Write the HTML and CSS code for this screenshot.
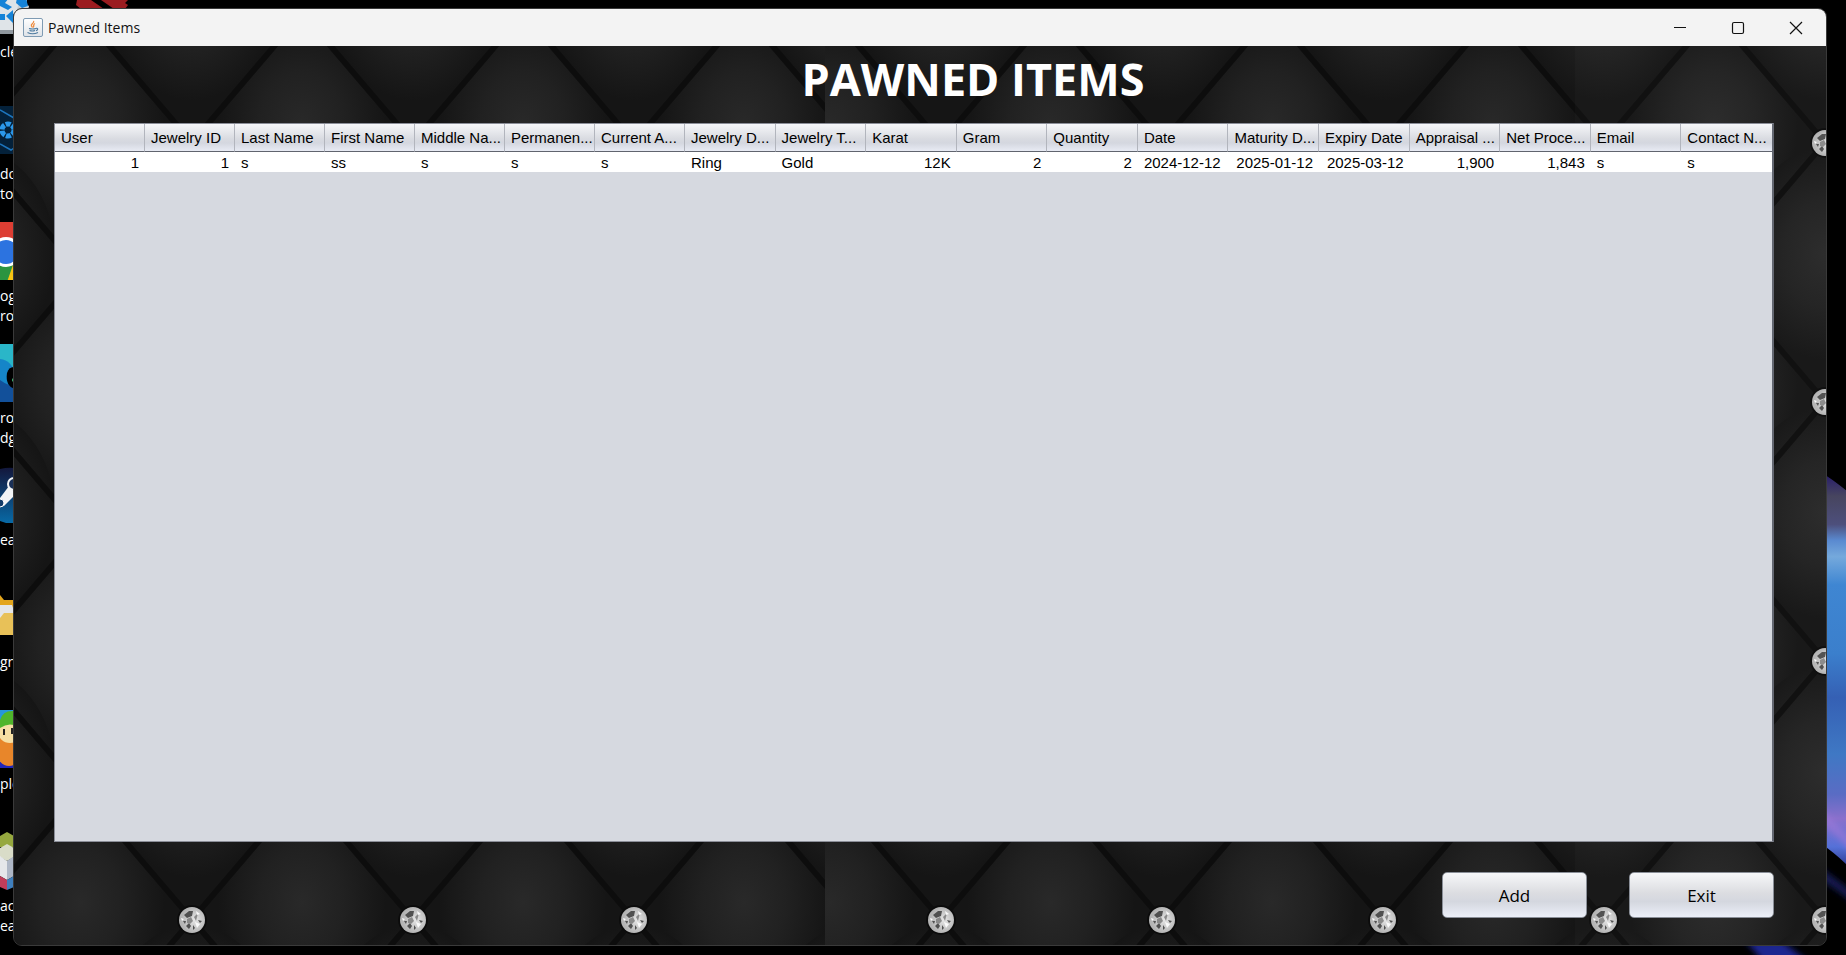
FILE: index.html
```html
<!DOCTYPE html>
<html lang="en">
<head>
<meta charset="utf-8">
<title>Pawned Items</title>
<link rel="stylesheet" href="styles.css">
</head>
<body>
<div class="desktop">
  <svg class="wallpaper" aria-hidden="true" viewBox="0 0 60 530" preserveAspectRatio="none">
    <defs>
      <linearGradient id="wave" x1="0" y1="0" x2="0" y2="1">
        <stop offset="0" stop-color="#24186c"/>
        <stop offset=".06" stop-color="#47455f"/>
        <stop offset=".13" stop-color="#4d4f7c"/>
        <stop offset=".17" stop-color="#5a8ad0"/>
        <stop offset=".21" stop-color="#75a9dc"/>
        <stop offset=".28" stop-color="#3f86d2"/>
        <stop offset=".45" stop-color="#3b7fcc"/>
        <stop offset=".56" stop-color="#3560b4"/>
        <stop offset=".70" stop-color="#3f78c4"/>
        <stop offset=".80" stop-color="#5a6cc4"/>
        <stop offset=".86" stop-color="#8a70cc"/>
        <stop offset=".93" stop-color="#5571d8"/>
        <stop offset="1" stop-color="#1d2474"/>
      </linearGradient>
      <filter id="soft" x="-20%" y="-20%" width="140%" height="140%"><feGaussianBlur stdDeviation="3"/></filter>
    </defs>
    <path d="M34 47Q50 56 70 74V450Q55 432 34 418Z" fill="url(#wave)"/>
    <path d="M30 380Q50 396 70 420V432Q50 408 30 394Z" fill="#9a78d8" opacity=".7" filter="url(#soft)"/>
    <path d="M30 440Q48 452 70 470V480Q48 462 30 452Z" fill="#171a55" filter="url(#soft)"/>
    <path d="M-40 516H-4L26 540H-20Z" fill="#1e2590" filter="url(#soft)"/>
  </svg>
  <svg class="red-icon" viewBox="0 0 54 9" aria-hidden="true"><path d="M2 0H53L50 3L53 5L50 9H39L26 0H16L29 9H6L1 5Z" fill="#9b1c20"/></svg>

  <div class="shortcuts">
    <div class="shortcut">
      <svg viewBox="0 0 30 60" aria-hidden="true">
        <path d="M0 0H29L24 58L16 58H0Z" fill="#dfe4e8"/>
        <path d="M0 54H24V58H0Z" fill="#8f979e"/>
        <path d="M20 24L29 30L24 54H16L12 48Z" fill="#c9cfd4"/>
        <path d="M0 22H9L5 27L12 31L8 34L0 30ZM17 22H26L28 30L22 32L16 27ZM0 38H5V44H0ZM6 40L13 34V38L22 36L20 44L13 43V47Z" fill="#1583d8"/>
      </svg>
      <span class="label">cle</span>
    </div>
    <div class="shortcut">
      <svg viewBox="0 0 30 60" aria-hidden="true">
        <path d="M0 8H30V56H0Z" fill="#04213a"/>
        <path d="M0 12L14 20M0 46L11 52L14 50" fill="none" stroke="#1d75bd" stroke-width="1.500"/>
        <circle cx="8" cy="32" r="6" fill="none" stroke="#2b98ea" stroke-width="5" stroke-dasharray="5 1.3"/>
      </svg>
      <span class="label">dol<br>tos</span>
    </div>
    <div class="shortcut">
      <svg viewBox="0 0 30 60" aria-hidden="true">
        <path d="M0 2H30V20H0Z" fill="#dd3e33"/><path d="M0 28H20L8 62H0Z" fill="#2a9440"/><path d="M14 42V62H7Z" fill="#f7c413"/>
        <circle cx="6" cy="32" r="15" fill="#fff"/><circle cx="6" cy="32" r="12" fill="#2c73e0"/>
      </svg>
      <span class="label">og<br>ror</span>
    </div>
    <div class="shortcut">
      <svg viewBox="0 0 30 60" aria-hidden="true">
        <path d="M0 2H30V60H0Z" fill="#2ab6c8"/><path d="M0 17Q12 18 16 34V62H0Z" fill="#1585c8"/><path d="M0 38Q8 44 16 44V62H0Z" fill="#12509a"/>
        <path d="M7 31Q9 24 15 25V47Q5 44 7 31Z" fill="#000"/><circle cx="14" cy="38" r="2" fill="#42c77d"/>
      </svg>
      <span class="label">ro:<br>dg</span>
    </div>
    <div class="shortcut">
      <svg viewBox="0 0 30 60" aria-hidden="true">
        <defs><linearGradient id="steam" x1="0" y1="0" x2="0" y2="1"><stop stop-color="#13173c"/><stop offset="1" stop-color="#0869a5"/></linearGradient></defs>
        <path d="M0 5Q8 3 14 4V59H6L0 57Z" fill="url(#steam)"/>
        <path d="M0 34L9 22L16 30L4 42L0 43Z" fill="#f2f4f6"/><circle cx="14" cy="20" r="6" fill="#1b3158" stroke="#f2f4f6" stroke-width="2"/><circle cx="0" cy="39" r="4" fill="#123b68" stroke="#fff" stroke-width="1"/>
      </svg>
      <span class="label">ea</span>
    </div>
    <div class="shortcut">
      <svg viewBox="0 0 30 60" aria-hidden="true">
        <path d="M0 9L4 14H14V49H0Z" fill="#e3a51c"/><path d="M0 19H12L14 25V40H0Z" fill="#e4e6e8"/><path d="M0 32L4 27H14V49H0Z" fill="#e8c158"/>
      </svg>
      <span class="label">grii</span>
    </div>
    <div class="shortcut">
      <svg viewBox="0 0 30 60" aria-hidden="true">
        <path d="M0 2H14V60H0Z" fill="#2696dc"/><path d="M0 54H14V60H0Z" fill="#2026b8"/><ellipse cx="9" cy="42" rx="13" ry="16" fill="#e8862a"/>
        <ellipse cx="10" cy="24" rx="12" ry="11" fill="#f6dfa4"/><path d="M0 12Q3 2 14 3V17Q7 15 0 20Z" fill="#4fb52b"/><path d="M4 21V27M12 20V26" stroke="#222" stroke-width="2"/>
      </svg>
      <span class="label">ple</span>
    </div>
    <div class="shortcut">
      <svg viewBox="0 0 30 60" aria-hidden="true">
        <path d="M0 6L7 2L14 6V17H0Z" fill="#96a83f"/><path d="M0 18L7 14L14 18V27L7 31L0 27Z" fill="#d9dcc8"/><path d="M0 26L7 31V50L0 46Z" fill="#e5e7ea"/><path d="M7 31L14 26V46L7 50Z" fill="#aeb7c6"/><path d="M0 46L7 50V60L0 57Z" fill="#c13d5b"/><path d="M7 50L14 46V57L7 60Z" fill="#3f7fbd"/>
      </svg>
      <span class="label">ac<br>ea</span>
    </div>
  </div>

  <main class="window">
    <header class="titlebar">
      <svg class="java" viewBox="0 0 20 20" aria-hidden="true">
        <defs><linearGradient id="tile" x1="0" y1="0" x2="0" y2="1"><stop stop-color="#fff"/><stop offset="1" stop-color="#dfe3e8"/></linearGradient></defs>
        <rect x=".5" y=".5" width="19" height="18" rx="1.5" fill="url(#tile)" stroke="#7f9bb3"/>
        <path d="M10.500 3C12 5 7 6 8.500 8L9.500 9.500M12 5.500C9.500 6.800 11.500 7.500 10.300 9.500" fill="none" stroke="#ee8a3c" stroke-width="1.300"/>
        <path d="M6 10.500Q9.500 11.500 13 10.500M6.500 12.500Q9.500 13.500 12 12.500M13 10.300C15.500 10 15 12 13 12.800M4.500 14.500Q9.500 17 15 14.500" fill="none" stroke="#4d7a9e" stroke-width="1.200"/>
      </svg>
      <span class="caption">Pawned Items</span>
      <div class="controls">
        <button class="control" aria-label="Minimize"><svg viewBox="0 0 14 14"><path d="M1 6.500H13"/></svg></button>
        <button class="control" aria-label="Maximize"><svg viewBox="0 0 14 14"><rect x="1.500" y="1.500" width="11" height="11" rx="1.500"/></svg></button>
        <button class="control" aria-label="Close"><svg viewBox="0 0 14 14"><path d="M1 1L13 13M13 1L1 13"/></svg></button>
      </div>
    </header>

    <div class="content">
      <svg class="quilt" aria-hidden="true">
        <defs>
          <radialGradient id="pad"><stop offset="0" stop-color="#292929"/><stop offset=".5" stop-color="#212121"/><stop offset="1" stop-color="#151515"/></radialGradient>
          <radialGradient id="stone" cx=".6" cy=".5"><stop stop-color="#e6e6e6"/><stop offset=".7" stop-color="#c4c4c4"/><stop offset="1" stop-color="#b4b4b4"/></radialGradient>
          <g id="cell">
            <path d="M110.500 0L221 129.500L110.500 259L0 129.500Z" fill="#151515"/>
            <ellipse cx="110" cy="112" rx="84" ry="106" fill="url(#pad)"/>
          </g>
          <g id="gem">
            <circle r="15" fill="#0b0b0b"/>
            <circle r="13" fill="url(#stone)"/>
            <path d="M-8 -5L-3 -9L1 -9L0 -4L-5 -2ZM-9 1L-6 1L-7 4ZM-6 6L-3 3L-1 6L-3 9ZM1 5L3 8L1 10ZM6 0L10 1L8 3Z" fill="#505050"/>
            <path d="M-5 -1L-1 -3L1 1L-2 4L-5 3ZM2 -3L6 -7L4 1Z" fill="#8a8a8a"/>
            <path d="M3 2L8 4L5 8ZM-11 -2L-8 -1L-10 1ZM4 -9L8 -6L5 -5Z" fill="#fafafa"/>
          </g>
          <g id="quilt-unit">
            <rect width="221" height="259" fill="#151515"/>
            <use href="#cell"/>
            <use href="#cell" x="-110" y="-130"/><use href="#cell" x="111" y="-130"/>
            <use href="#cell" x="-110" y="129"/><use href="#cell" x="111" y="129"/>
            <path d="M0 129.500L110.500 0L221 129.500L110.500 259Z" fill="none" stroke="#0d0d0d" stroke-width="6"/>
            <use href="#gem" x="0" y="130"/><use href="#gem" x="221" y="130"/>
          </g>
          <pattern id="quilt-left" width="221" height="259" x="178" y="-33" patternUnits="userSpaceOnUse"><use href="#quilt-unit"/></pattern>
          <pattern id="quilt-right" width="221" height="259" x="927" y="-33" patternUnits="userSpaceOnUse"><use href="#quilt-unit"/></pattern>
        </defs>
        <rect width="811" height="100%" fill="url(#quilt-left)"/>
        <rect x="811" width="100%" height="100%" fill="url(#quilt-right)"/>
        <rect x="1561" width="100%" height="100%" fill="#fff" opacity=".02"/>
      </svg>

      <h1 class="heading">PAWNED ITEMS</h1>

      <div class="table-pane">
        <table class="items">
          <colgroup><col class="narrow" span="7"><col span="12"></colgroup>
          <thead>
            <tr><th>User</th><th>Jewelry ID</th><th>Last Name</th><th>First Name</th><th>Middle Na...</th><th>Permanen...</th><th>Current A...</th><th>Jewelry D...</th><th>Jewelry T...</th><th>Karat</th><th>Gram</th><th>Quantity</th><th>Date</th><th>Maturity D...</th><th>Expiry Date</th><th>Appraisal ...</th><th>Net Proce...</th><th>Email</th><th>Contact N...</th></tr>
          </thead>
          <tbody>
            <tr><td class="num">1</td><td class="num">1</td><td>s</td><td>ss</td><td>s</td><td>s</td><td>s</td><td>Ring</td><td>Gold</td><td class="num">12K</td><td class="num">2</td><td class="num">2</td><td>2024-12-12</td><td class="num">2025-01-12</td><td class="num">2025-03-12</td><td class="num">1,900</td><td class="num">1,843</td><td>s</td><td>s</td></tr>
          </tbody>
        </table>
      </div>

      <div class="actions">
        <button class="action">Add</button>
        <button class="action">Exit</button>
      </div>
    </div>
  </main>
</div>
</body>
</html>
```
FILE: styles.css
```css
* { box-sizing: border-box; }

body {
  margin: 0;
  background: #000;
  font-family: "Open Sans", "Noto Sans", sans-serif;
}

.desktop {
  position: relative;
  display: flex;
  height: 100vh;
  padding: 8px 19px 9px 13px;
  overflow: hidden;
  background: #000;
}

.wallpaper {
  position: absolute;
  right: 0;
  bottom: 0;
  width: 60px;
  height: 530px;
  overflow: visible;
}

.red-icon {
  position: absolute;
  left: 75px;
  top: 0;
  width: 54px;
  height: 9px;
}

.shortcuts {
  position: absolute;
  left: 0;
  top: -24px;
}

.shortcut {
  display: flex;
  flex-direction: column;
  width: 30px;
  height: 122px;
  overflow: hidden;
}

.shortcut svg {
  flex: none;
  width: 30px;
  height: 60px;
}

.label {
  padding-top: 6px;
  color: #fff;
  font-size: 14px;
  line-height: 20px;
}

.window {
  position: relative;
  display: flex;
  flex-direction: column;
  flex: 1;
  overflow: hidden;
  border: 1px solid #3a3a3a;
  border-radius: 9px;
  background: #151515;
}

.titlebar {
  display: flex;
  align-items: center;
  height: 37px;
  padding: 0 1px 0 9px;
  background: #f3f3f3;
}

.java {
  width: 20px;
  height: 20px;
}

.caption {
  margin-left: 5px;
  color: #111;
  font-size: 14px;
}

.controls {
  display: flex;
  margin-left: auto;
}

.control {
  display: grid;
  place-items: center;
  width: 58px;
  height: 36px;
  padding: 0;
  border: 0;
  background: none;
}

.control svg {
  width: 14px;
  height: 14px;
  fill: none;
  stroke: #111;
  stroke-width: 1.2;
}

.content {
  position: relative;
  display: flex;
  flex-direction: column;
  flex: 1;
  padding: 0 52px 27px 40px;
}

.quilt {
  position: absolute;
  inset: 0;
  width: 100%;
  height: 100%;
}

.heading {
  position: relative;
  margin: 0;
  padding: 0 0 11px 118px;
  color: #fff;
  font-size: 45px;
  font-weight: 700;
  line-height: 66px;
  text-align: center;
}

.table-pane {
  position: relative;
  flex: 1;
  border: 1px solid #8b8e98;
  border-right: 2px solid #646872;
  background: #d6d9e0;
}

.items {
  width: 100%;
  border-collapse: separate;
  border-spacing: 0;
  table-layout: fixed;
  color: #000;
  font-family: "Liberation Sans", Arial, sans-serif;
  font-size: 15px;
}

.narrow { width: 90px; }

.items th {
  height: 28px;
  padding: 0 0 0 6px;
  overflow: hidden;
  border-right: 1px solid #b2b5bd;
  border-bottom: 1px solid #60646e;
  background: linear-gradient(#f6f7f9, #d9dbe1 55%, #d4d7df 70%, #e8ebf4);
  font-weight: 400;
  text-align: left;
  white-space: nowrap;
}

.items th:last-child { border-right: 0; }

.items td {
  height: 20px;
  padding: 2px 6px 0;
  background: #fff;
  line-height: 18px;
  white-space: nowrap;
}

.items .num { text-align: right; }

.actions {
  position: relative;
  display: flex;
  justify-content: flex-end;
  gap: 42px;
  padding-top: 30px;
}

.action {
  width: 145px;
  height: 46px;
  border: 1px solid #8a8f98;
  border-radius: 5px;
  background: linear-gradient(#f6f7f9, #dcdde1 45%, #d4d7df 65%, #eceff8);
  color: #000;
  font-family: inherit;
  font-size: 17px;
}
```
